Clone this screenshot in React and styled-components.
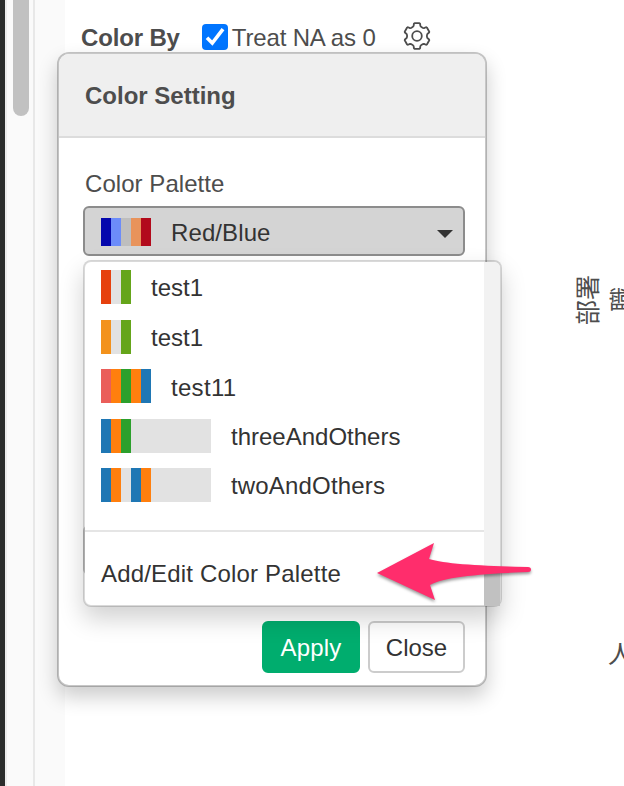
import React from "react";
import styled, { createGlobalStyle } from "styled-components";

const Global = createGlobalStyle`
  * { box-sizing: border-box; }
  body { margin: 0; overflow: hidden; background: #fff; }
  button { font: inherit; margin: 0; }
`;

const Page = styled.div`
  position: relative;
  display: flex;
  width: 624px;
  height: 786px;
  overflow: hidden;
  color: #4d4d4d;
  font: 24px/34px "Liberation Sans", "Noto Sans CJK JP", sans-serif;
`;

const Edge = styled.div`
  width: 7px;
  background: #fafafa;
  border-left: 5px solid #2b2d2c;
  border-right: 2px solid #ececec;
`;

const ScrollTrack = styled.div`
  width: 28px;
  padding-left: 6px;
  background: #fafafa;
  border-right: 2px solid #e8e8e8;
`;

const ScrollThumb = styled.div`
  width: 16px;
  height: 116px;
  background: #c1c1c1;
  border-radius: 0 0 8px 8px;
`;

const Gutter = styled.div`
  width: 30px;
  background: #fafafa;
`;

const Main = styled.main`
  flex: 1;
  padding: 20px 0 0 16px;
`;

const Toolbar = styled.div`
  display: flex;
  align-items: center;
  height: 34px;
`;

const Text = styled.span`
  display: inline-block;
  white-space: nowrap;
  font-weight: ${(p) => (p.$bold ? 700 : 400)};
  letter-spacing: ${(p) => p.$track || 0}px;
  padding-top: ${(p) => p.$drop || 0}px;
`;

const CheckBox = styled.span`
  display: flex;
  width: 26px;
  height: 26px;
  margin: 0 4px 0 22px;
  background: #0075ff;
  border-radius: 4px;
`;

const GearButton = styled.span`
  display: flex;
  margin: -3px 0 0 27px;
`;

const AxisLabel = styled.div`
  position: absolute;
  left: ${(p) => p.$x}px;
  top: ${(p) => p.$y}px;
  font-size: 25px;
  line-height: 30px;
  white-space: nowrap;
  writing-mode: ${(p) => (p.$turned ? "sideways-lr" : "horizontal-tb")};
`;

const Popover = styled.section`
  position: absolute;
  left: 57px;
  top: 52px;
  width: 430px;
  height: 635px;
  display: flex;
  flex-direction: column;
  background: #fff;
  background-clip: padding-box;
  border: 2px solid rgba(0, 0, 0, 0.22);
  border-radius: 12px;
  box-shadow: 0 10px 20px rgba(0, 0, 0, 0.2);
`;

const PopoverHeader = styled.header`
  height: 84px;
  padding: 25px 26px;
  background: #efefef;
  border-bottom: 2px solid #dcdcdc;
  border-radius: 10px 10px 0 0;
`;

const PopoverBody = styled.div`
  flex: 1;
  padding: 29px 20px 0 24px;
`;

const FieldLabel = styled.div`
  height: 39px;
  padding-left: 2px;
`;

const Select = styled.div`
  display: flex;
  align-items: center;
  height: 50px;
  padding: 2px 10px 0 16px;
  color: #333;
  background: ${(p) => (p.$open ? "#d4d4d4" : "#fff")};
  border: 2px solid ${(p) => (p.$open ? "#8c8c8c" : "#ccc")};
  border-radius: 6px;
  & + & { margin-top: 269px; }
`;

const Caret = styled.span`
  margin: 3px 0 0 auto;
  border: 8px solid transparent;
  border-top-color: #333;
  border-bottom: 0;
`;

const Swatches = styled.span`
  display: flex;
  height: ${(p) => p.$height || 34}px;
  margin-right: 20px;
`;

const Swatch = styled.span`
  width: 10px;
  background: ${(p) => p.$color};
`;

const Menu = styled.div`
  position: absolute;
  left: 83px;
  top: 260px;
  display: flex;
  width: 419px;
  height: 347px;
  color: #333;
  background: #fff;
  background-clip: padding-box;
  border: 2px solid rgba(0, 0, 0, 0.15);
  border-radius: 8px;
  box-shadow: 0 12px 24px rgba(0, 0, 0, 0.18);
`;

const MenuList = styled.div`
  flex: 1;
  padding-top: 0.4px;
`;

const MenuItem = styled.div`
  display: flex;
  align-items: center;
  height: 49.5px;
  padding-left: 16px;
`;

const MenuFooter = styled.div`
  margin-top: 20.2px;
  padding: 25px 0 0 16px;
  border-top: 2px solid #e5e5e5;
`;

const MenuTrack = styled.div`
  display: flex;
  align-items: flex-end;
  width: 16px;
  background: #f2f2f2;
  border-radius: 0 6px 0 0;
`;

const MenuThumb = styled.div`
  width: 16px;
  height: 35px;
  margin-bottom: -1px;
  background: #c1c1c1;
`;

const Actions = styled.footer`
  display: flex;
  justify-content: flex-end;
  gap: 8px;
  padding: 0 20px 12px;
`;

const Button = styled.button`
  width: ${(p) => (p.$primary ? 98 : 97)}px;
  height: 52px;
  padding: 2px 0 0;
  color: ${(p) => (p.$primary ? "#fff" : "#333")};
  background: ${(p) => (p.$primary ? "#00ad6e" : "#fff")};
  border: 2px solid ${(p) => (p.$primary ? "#00ad6e" : "#ccc")};
  border-radius: 6px;
`;

const Pointer = styled.svg`
  position: absolute;
  left: 370px;
  top: 535px;
  filter: drop-shadow(0 2px 1.5px rgba(0, 0, 0, 0.4));
`;

const RED_BLUE = ["#0508ad", "#6c8cf9", "#bebebe", "#e8935b", "#b20a1c"];
const GREY = "#e2e2e2";
const PALETTES = [
  { name: "test1", colors: ["#e6410e", GREY, "#65a51a"] },
  { name: "test1", drop: 3, colors: ["#f3921c", GREY, "#65a51a"] },
  { name: "test11", drop: 3, track: 0.3, colors: ["#ea5e5a", "#ff7f0e", "#2ca02c", "#ff7f0e", "#1f77b4"] },
  { name: "threeAndOthers", drop: 3, colors: ["#1f77b4", "#ff7f0e", "#2ca02c", ...Array(8).fill(GREY)] },
  { name: "twoAndOthers", track: 0.17, colors: ["#1f77b4", "#ff7f0e", GREY, "#1f77b4", "#ff7f0e", ...Array(6).fill(GREY)] },
];

function Palette({ colors, height }) {
  return (
    <Swatches $height={height}>
      {colors.map((color, i) => <Swatch key={i} $color={color} />)}
    </Swatches>
  );
}

// One tooth of the gear, repeated every 60 degrees around the centre.
const TOOTH = [[-4.3, -9], [-3.4, -10], [-3.1, -12.2], [-2.4, -12.8], [2.4, -12.8], [3.1, -12.2], [3.4, -10], [4.3, -9]];
const GEAR_POINTS = [0, 1, 2, 3, 4, 5]
  .flatMap((n) => {
    const c = Math.cos((n * Math.PI) / 3);
    const s = Math.sin((n * Math.PI) / 3);
    return TOOTH.map(([x, y]) => `${(x * c - y * s).toFixed(2)},${(x * s + y * c).toFixed(2)}`);
  })
  .join(" ");

function Gear() {
  return (
    <svg width="28" height="28" viewBox="-14 -14 28 28" fill="none" stroke="#4d4d4d" strokeWidth="1.8" strokeLinejoin="round">
      <polygon points={GEAR_POINTS} />
      <circle cx="0" cy="0" r="4.8" />
    </svg>
  );
}

export default function App() {
  return (
    <>
      <Global />
      <Page>
        <Edge />
        <ScrollTrack><ScrollThumb /></ScrollTrack>
        <Gutter />
        <Main>
          <Toolbar>
            <Text $bold $track={-0.15} $drop={2}>Color By</Text>
            <CheckBox>
              <svg width="26" height="26" viewBox="0 0 26 26" fill="none" stroke="#fff" strokeWidth="3.6">
                <path d="M5 13.7l5.3 5.4L21 5.2" />
              </svg>
            </CheckBox>
            <Text $track={-0.16} $drop={2}>Treat NA as 0</Text>
            <GearButton><Gear /></GearButton>
          </Toolbar>
        </Main>
        <AxisLabel $x={573} $y={275} $turned>部署</AxisLabel>
        <AxisLabel $x={607} $y={287} $turned>職</AxisLabel>
        <AxisLabel $x={608} $y={639}>人</AxisLabel>

        <Popover>
          <PopoverHeader><Text $bold>Color Setting</Text></PopoverHeader>
          <PopoverBody>
            <FieldLabel><Text $track={0.05}>Color Palette</Text></FieldLabel>
            <Select $open>
              <Palette colors={RED_BLUE} height={28} />
              <Text $track={0.1} $drop={2}>Red/Blue</Text>
              <Caret />
            </Select>
            <Select />
          </PopoverBody>
          <Actions>
            <Button $primary><Text $track={0.2}>Apply</Text></Button>
            <Button><Text>Close</Text></Button>
          </Actions>
        </Popover>

        <Menu>
          <MenuList>
            {PALETTES.map((palette, i) => (
              <MenuItem key={i}>
                <Palette colors={palette.colors} />
                <Text $track={palette.track} $drop={palette.drop || 1.7}>{palette.name}</Text>
              </MenuItem>
            ))}
            <MenuFooter><Text $track={0.18}>Add/Edit Color Palette</Text></MenuFooter>
          </MenuList>
          <MenuTrack><MenuThumb /></MenuTrack>
        </Menu>

        <Pointer width="170" height="75" viewBox="0 0 170 75">
          <path fill="#ff2d6c" d="M7 38L64 8L59 24C75 29 112 31 158 32Q161 32 161 34.500Q161 37 158 37C110 39 74 42 60 50L65 65Z" />
        </Pointer>
      </Page>
    </>
  );
}
